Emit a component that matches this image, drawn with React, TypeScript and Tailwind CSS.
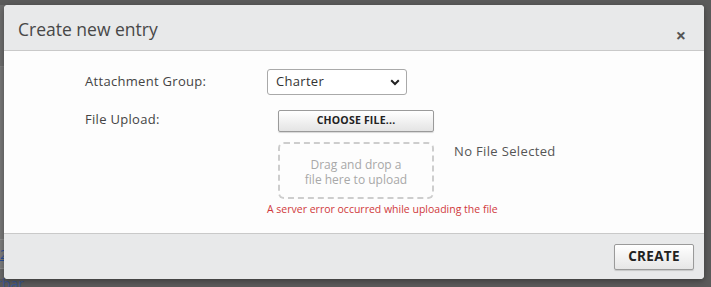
import React from "react";

export default function App() {
  const font = { fontFamily: '"Open Sans", "Liberation Sans", sans-serif' };
  return (
    <div className="relative w-[711px] h-[287px] overflow-hidden bg-[#5b5b5b]" style={font}>
      {/* underlying page glimpse (behind the dialog overlay) */}
      <div className="flex flex-col w-[6px] h-full pt-[5px]">
        <div className="h-[62px] bg-[#6d6d6d] border-b border-[#7f7f7f]" />
        <div className="h-[172px] bg-[#787878]" />
        <div className="h-[30px] bg-[#7c7c7c] border-y border-[#8c8c8c] flex items-center overflow-visible">
          <span className="text-[13px] leading-none text-[#2a4f9a] underline">2</span>
        </div>
        <div className="flex-1 bg-[#6a6a6a]" />
        <div className="h-[8px] bg-[#5a5a5a] overflow-visible whitespace-nowrap">
          <span className="block text-[14px] leading-[10px] text-[#3a5590] -ml-[3px]">tbar</span>
        </div>
      </div>

      {/* dialog overlay */}
      <div className="absolute left-[4px] top-[5px] w-[700px] h-[274px] rounded-[4px] overflow-hidden flex flex-col bg-[#fdfdfd] shadow-[0_2px_6px_rgba(0,0,0,0.35)]">
        {/* header */}
        <div className="h-[46px] shrink-0 bg-[#e8e9ea] border-b border-[#c9c9c9] flex items-center justify-between pl-[14px] pr-[18px]">
          <span className="text-[17.5px] text-[#474747] pt-[3px]">Create new entry</span>
          <span className="text-[18px] font-bold text-[#555] leading-none pt-[14px]">×</span>
        </div>

        {/* body */}
        <div className="flex-1 flex flex-col pt-[18px] pl-[81px]">
          <div className="flex items-center">
            <label className="w-[182px] text-[13px] tracking-[0.3px] text-[#444]">Attachment Group:</label>
            <div className="w-[140px] h-[26px] border border-[#a9a9a9] rounded-[3px] bg-white flex items-center justify-between pl-[8px] pr-[6px]">
              <span className="text-[13px] tracking-[0.3px] text-[#333]">Charter</span>
              <svg width="10" height="7" viewBox="0 0 10 7">
                <path d="M1.2 1.3 L5 5 L8.8 1.3" fill="none" stroke="#222" strokeWidth="2" />
              </svg>
            </div>
          </div>

          <div className="flex mt-[15px]">
            <label className="w-[182px] text-[13px] tracking-[0.3px] text-[#444] leading-[18px]">File Upload:</label>
            <div className="flex flex-col">
              <button className="ml-[11px] w-[156px] h-[22px] border border-[#9a9a9a] rounded-[2px] bg-gradient-to-b from-[#ffffff] to-[#e4e4e4] flex items-center justify-center text-[10.5px] tracking-[0.2px] font-bold text-[#222] shadow-[0_1px_1px_rgba(0,0,0,0.15)]">
                CHOOSE FILE...
              </button>
              <div className="flex items-start mt-[10px]">
                <div className="ml-[11px] w-[156px] h-[57px] border-2 border-dashed border-[#cdcdcd] rounded-[6px] flex items-center justify-center pt-[2px]">
                  <p className="text-center text-[12px] leading-[15px] text-[#a8a8a8]">
                    Drag and drop a<br />file here to upload
                  </p>
                </div>
                <span className="ml-[20px] text-[13px] tracking-[0.35px] text-[#555] leading-[18px]">No File Selected</span>
              </div>
              <span className="mt-[3px] text-[10.5px] leading-[15px] text-[#d0393b] whitespace-nowrap">
                A server error occurred while uploading the file
              </span>
            </div>
          </div>
        </div>

        {/* footer */}
        <div className="h-[46px] shrink-0 bg-[#e8e9ea] border-t border-[#c9c9c9] flex items-center justify-end pr-[10px]">
          <button className="w-[80px] h-[26px] border border-[#9a9a9a] rounded-[2px] bg-gradient-to-b from-[#ffffff] to-[#e6e6e6] flex items-center justify-center text-[13.5px] tracking-[0.3px] font-bold text-[#222] shadow-[0_1px_1px_rgba(0,0,0,0.15)]">
            CREATE
          </button>
        </div>
      </div>
    </div>
  );
}
